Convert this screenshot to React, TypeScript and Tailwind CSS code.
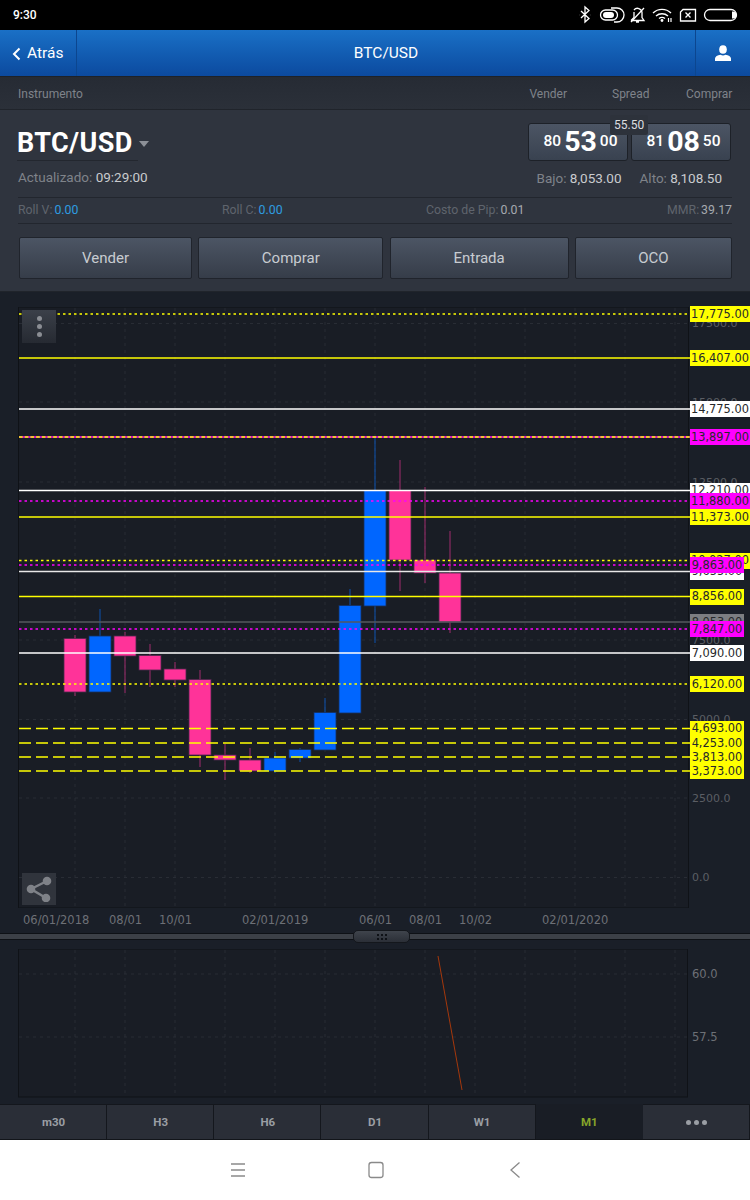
/** Trading screen — BTC/USD quote panel, monthly candle chart with levels, indicator pane. */
import { Fragment } from "react";

const ROBOTO = "font-['Roboto',sans-serif]";
const DEJAVU = "font-['DejaVu_Sans',sans-serif]";

type Candle = { x: number; top: number; bottom: number; high: number; low: number; up: boolean };

const CANDLES: Candle[] = [
  { x: 75, top: 638.5, bottom: 692, high: 635, low: 696, up: false },
  { x: 100, top: 636, bottom: 692, high: 609, low: 692, up: true },
  { x: 125, top: 636, bottom: 656, high: 632, low: 693, up: false },
  { x: 150, top: 655.5, bottom: 670, high: 644, low: 687, up: false },
  { x: 175, top: 669, bottom: 680, high: 662, low: 687, up: false },
  { x: 200, top: 679.5, bottom: 755, high: 670, low: 767, up: false },
  { x: 225, top: 755, bottom: 760, high: 744, low: 780, up: false },
  { x: 250, top: 760, bottom: 771, high: 748, low: 773, up: false },
  { x: 275, top: 758, bottom: 771, high: 752, low: 773, up: true },
  { x: 300, top: 749.5, bottom: 758, high: 748, low: 762, up: true },
  { x: 325, top: 712.5, bottom: 750, high: 698, low: 750, up: true },
  { x: 350, top: 605.5, bottom: 713, high: 589, low: 713, up: true },
  { x: 375, top: 490.5, bottom: 606, high: 437, low: 643, up: true },
  { x: 400, top: 490.5, bottom: 560, high: 460, low: 591, up: false },
  { x: 425, top: 560, bottom: 573, high: 487, low: 583, up: false },
  { x: 450, top: 573, bottom: 622, high: 531, low: 633, up: false },
];

type Level = { y: number; label: string; color: string; dash?: string; width: number; bg: string };

const YELLOW = "#ffff00";
const MAGENTA = "#ff00ff";

// order matters: later labels sit on top, same as the app
const LEVELS: Level[] = [
  { y: 314, label: "17,775.00", color: YELLOW, dash: "2.5 3", width: 60, bg: "bg-[#ffff00]" },
  { y: 358, label: "16,407.00", color: YELLOW, width: 60, bg: "bg-[#ffff00]" },
  { y: 409, label: "14,775.00", color: "#ffffff", width: 60, bg: "bg-white" },
  { y: 490.5, label: "12,210.00", color: "#ffffff", width: 60, bg: "bg-white" },
  { y: 517, label: "11,373.00", color: YELLOW, width: 60, bg: "bg-[#ffff00]" },
  { y: 560.5, label: "10,027.00", color: YELLOW, dash: "2.5 3", width: 60, bg: "bg-[#ffff00]" },
  { y: 571.5, label: "9,655.00", color: "#e8e8e8", width: 54, bg: "bg-white" },
  { y: 596.5, label: "8,856.00", color: YELLOW, width: 54, bg: "bg-[#ffff00]" },
  { y: 622, label: "8,053.00", color: "#55585e", width: 54, bg: "bg-[#7c7e82]" },
  { y: 653, label: "7,090.00", color: "#ffffff", width: 54, bg: "bg-white" },
  { y: 684, label: "6,120.00", color: YELLOW, dash: "2.5 3", width: 54, bg: "bg-[#ffff00]" },
  { y: 728.5, label: "4,693.00", color: YELLOW, dash: "12 5", width: 54, bg: "bg-[#ffff00]" },
  { y: 743, label: "4,253.00", color: YELLOW, dash: "12 5", width: 54, bg: "bg-[#ffff00]" },
  { y: 757, label: "3,813.00", color: YELLOW, dash: "12 5", width: 54, bg: "bg-[#ffff00]" },
  { y: 771, label: "3,373.00", color: YELLOW, dash: "12 5", width: 54, bg: "bg-[#ffff00]" },
  { y: 437, label: "13,897.00", color: YELLOW, dash: "3.7 2", width: 60, bg: "bg-[#ff00ff]" },
  { y: 501, label: "11,880.00", color: MAGENTA, dash: "2.5 3", width: 60, bg: "bg-[#ff00ff]" },
  { y: 565, label: "9,863.00", color: MAGENTA, dash: "2.5 3", width: 54, bg: "bg-[#ff00ff]" },
  { y: 629, label: "7,847.00", color: MAGENTA, dash: "2.5 3", width: 54, bg: "bg-[#ff00ff]" },
];

const AXIS = [
  { y: 323.5, label: "17500.0" },
  { y: 402, label: "15000.0" },
  { y: 482, label: "12500.0" },
  { y: 561, label: "10000.0" },
  { y: 640, label: "7500.0" },
  { y: 719.5, label: "5000.0" },
  { y: 798, label: "2500.0" },
  { y: 877.5, label: "0.0" },
];

const DATES = [
  { x: 23, label: "06/01/2018" },
  { x: 109, label: "08/01" },
  { x: 159, label: "10/01" },
  { x: 242, label: "02/01/2019" },
  { x: 359, label: "06/01" },
  { x: 409, label: "08/01" },
  { x: 459, label: "10/02" },
  { x: 542, label: "02/01/2020" },
];

const GRID_X = [75, 125, 175, 225, 275, 325, 375, 425, 475, 525, 575, 625, 675];

function StatusIcons() {
  return (
    <svg width="170" height="30" viewBox="575 0 170 30" fill="none" stroke="#fff" strokeWidth="1.3" aria-hidden="true">
      {/* bluetooth */}
      <path d="M581 11 l8 7.5 -4 3.5 v-15 l4 3.5 -8 7.5" />
      <path d="M579 15h.1M590.5 15h.1" strokeWidth="2" />
      {/* battery saver */}
      <rect x="600.5" y="10" width="17" height="10" rx="5" />
      <rect x="603" y="12" width="11" height="6" rx="3" fill="#fff" stroke="none" />
      <path d="M611 8 h6 a7 7 0 0 1 0 14 h-3" />
      {/* muted bell */}
      <path d="M631 20.5 h13 l-2 -3 v-5 a4.5 4.5 0 0 0 -8 -2.5 M634 12 v5.500 l-3 3 M636 22 h3" />
      <path d="M631 22 L644 8" />
      {/* wifi */}
      <path d="M653 13 a13 13 0 0 1 18 0 M656 16 a9 9 0 0 1 12 0 M659 18.500 a5 5 0 0 1 6 0" strokeWidth="1.4" />
      <circle cx="662" cy="20.500" r="1.400" fill="#fff" stroke="none" />
      <path d="M668.500 18 v4 M671 18 v4" strokeWidth="1.200" />
      {/* no sim */}
      <path d="M683 9.500 h12.500 v11.500 h-15 v-9 z" />
      <path d="M685.500 12.500 l5 5 M690.500 12.500 l-5 5" />
      {/* battery */}
      <rect x="704.500" y="9.500" width="32" height="11" rx="5.500" />
      <path d="M732 11.500 h1 a3.500 3.500 0 0 1 0 7 h-1 z" fill="#fff" stroke="none" />
    </svg>
  );
}

function StatusBar() {
  return (
    <div className={`flex h-[30px] items-center justify-between bg-black pl-[13px] pr-[5px] ${ROBOTO}`}>
      <span className="text-[12px] font-medium text-white">9:30</span>
      <StatusIcons />
    </div>
  );
}

function Header() {
  return (
    <div className={`flex h-[47px] border-b border-[#1d222a] bg-gradient-to-b from-[#1a70c6] to-[#0c4a9f] text-white ${ROBOTO}`}>
      <div className="flex w-[77px] items-center gap-[6px] border-r border-[#0c468f] pl-[12px] pt-[1px]">
        <svg width="9" height="14" viewBox="0 0 9 14" fill="none" stroke="#fff" strokeWidth="2" aria-hidden="true">
          <path d="M7.500 1.500 L2 7 l5.500 5.500" />
        </svg>
        <span className="text-[15.500px]">Atrás</span>
      </div>
      <div className="flex flex-1 items-center justify-center pt-[1px] text-[15.500px]">BTC/USD</div>
      <div className="flex w-[55px] items-center justify-center border-l border-[#0c468f]">
        <svg width="16" height="16" viewBox="0 0 16 16" fill="#fff" aria-hidden="true">
          <ellipse cx="8" cy="4.500" rx="3.800" ry="4.300" />
          <path d="M0 16 v-2.500 c0 -2 2.500 -3 5.500 -3.700 q2.500 1.200 5 0 c3 .7 5.500 1.700 5.500 3.700 V16 z" />
        </svg>
      </div>
    </div>
  );
}

function PriceButton({ a, b, c }: { a: string; b: string; c: string }) {
  return (
    <div className="flex h-[38px] items-center justify-center gap-[3px] rounded-[3px] border border-[#1d2128] bg-gradient-to-b from-[#4c5564] to-[#394250] pl-[5px] text-white">
      <span className="text-[15.500px] font-medium">{a}</span>
      <span className="text-[28.500px] font-bold leading-none">{b}</span>
      <span className="text-[15.500px] font-medium">{c}</span>
    </div>
  );
}

function ActionButton({ children }: { children: string }) {
  return (
    <div className="flex h-[42px] items-center justify-center rounded-[2px] border border-[#20242c] bg-gradient-to-b from-[#4c5564] to-[#363d49] text-[15px] text-[#c8ccd1]">
      {children}
    </div>
  );
}

function Stat({ label, value, blue, end }: { label: string; value: string; blue?: boolean; end?: boolean }) {
  return (
    <div className={end ? "text-right" : ""}>
      <span className="text-[#5f646d]">{label}</span>
      <span className={`ml-[2px] ${blue ? "text-[#2e9ce0]" : "text-[#a5a9af]"}`}>{value}</span>
    </div>
  );
}

function QuotePanel() {
  return (
    <div className={ROBOTO}>
      <div className="flex h-[33px] items-center justify-between border-b border-[#20242b] bg-gradient-to-b from-[#262b34] to-[#2b3039] px-[18px] pt-[1px] text-[12px] text-[#7f838a]">
        <span>Instrumento</span>
        <div className="flex">
          <span className="w-[38px] text-right">Vender</span>
          <span className="ml-[45px] w-[37px]">Spread</span>
          <span className="ml-[37px] w-[46px] text-right">Comprar</span>
        </div>
      </div>

      <div className="h-[182px] border-b border-[#20242b] bg-[#2f343e]">
        <div className="flex h-[87px] justify-between pl-[17px] pr-[19px]">
          <div className="w-[121px]">
            <div className="mt-[16px] flex h-[35px] items-center gap-[6px] whitespace-nowrap border-b border-[#23272f] text-[27px] font-bold leading-none tracking-[0.4px] text-white">
              BTC/USD
              <span className="mt-[1px] h-0 w-0 shrink-0 border-x-[5px] border-t-[6px] border-x-transparent border-t-[#8c9097]" />
            </div>
            <div className="ml-[1px] mt-[6px] whitespace-nowrap text-[13.500px]">
              <span className="text-[#7f838a]">Actualizado:</span> <span className="text-[#c9cbce]">09:29:00</span>
            </div>
          </div>

          <div className="relative w-[203px] pt-[13px]">
            <div className="grid grid-cols-2 gap-[3px]">
              <PriceButton a="80" b="53" c="00" />
              <PriceButton a="81" b="08" c="50" />
            </div>
            <div className="absolute left-[82px] top-[5px] rounded-[2px] bg-[#2d323b] px-[4px] py-[2px] text-[12px] leading-[16px] text-[#dcdee0]">55.50</div>
            <div className="mt-[7px] flex justify-end gap-[18px] pr-[9px] text-[13.500px]">
              <span className="text-[#7f838a]">
                Bajo: <span className="text-[#c9cbce]">8,053.00</span>
              </span>
              <span className="text-[#7f838a]">
                Alto: <span className="text-[#c9cbce]">8,108.50</span>
              </span>
            </div>
          </div>
        </div>

        <div className="mx-[18px] grid h-[27px] grid-cols-[204px_204px_204px_1fr] items-center border-y border-[#22262e] text-[12.300px]">
          <Stat label="Roll V:" value="0.00" blue />
          <Stat label="Roll C:" value="0.00" blue />
          <Stat label="Costo de Pip:" value="0.01" />
          <Stat label="MMR:" value="39.17" end />
        </div>

        <div className="ml-[19px] mt-[13px] grid w-[713px] grid-cols-[173px_185px_179px_157px] gap-x-[6.300px]">
          <ActionButton>Vender</ActionButton>
          <ActionButton>Comprar</ActionButton>
          <ActionButton>Entrada</ActionButton>
          <ActionButton>OCO</ActionButton>
        </div>
      </div>
    </div>
  );
}

function ChartGrid({ top, bottom, rows }: { top: number; bottom: number; rows: number[] }) {
  return (
    <g stroke="#292d35" strokeWidth="1" strokeDasharray="3 4">
      {GRID_X.map((x) => (
        <line key={x} x1={x} x2={x} y1={top} y2={bottom} />
      ))}
      {rows.map((y) => (
        <line key={y} x1={19} x2={688} y1={y} y2={y} />
      ))}
    </g>
  );
}

function MainChart() {
  return (
    <div className={`relative h-[601px] ${DEJAVU}`}>
      <svg className="absolute inset-0" width="750" height="601" viewBox="0 307 750 601" aria-hidden="true">
        <rect x="18.500" y="307" width="670" height="601" fill="#191d25" stroke="#0f1217" />
        <ChartGrid top={308} bottom={907} rows={AXIS.map((a) => a.y)} />

        {CANDLES.map((c) => (
          <Fragment key={c.x}>
            <line x1={c.x} x2={c.x} y1={c.high} y2={c.low} stroke={c.up ? "#0c52b0" : "#a12d6e"} strokeWidth="1" />
            <rect
              x={c.x - 11}
              y={c.top}
              width={22}
              height={c.bottom - c.top}
              fill={c.up ? "#0066ff" : "#ff3399"}
              stroke={c.up ? "#17305c" : "#4c2a4b"}
              strokeWidth="0.800"
            />
          </Fragment>
        ))}

        {LEVELS.map((l) => (
          <Fragment key={l.label}>
            {l.label === "13,897.00" && <line x1={19} x2={690} y1={l.y} y2={l.y} stroke={MAGENTA} strokeWidth="1.500" />}
            <line x1={19} x2={690} y1={l.y} y2={l.y} stroke={l.color} strokeWidth={l.dash ? 1.600 : 1.500} strokeDasharray={l.dash} />
          </Fragment>
        ))}
      </svg>

      {AXIS.map((a) => (
        <span key={a.label} className="absolute left-[692px] -translate-y-1/2 text-[11px] text-[#5b5e64]" style={{ top: a.y - 306.5 }}>
          {a.label}
        </span>
      ))}

      {LEVELS.map((l) => (
        <span
          key={l.label}
          className={`absolute left-[690px] flex h-[16px] items-center justify-center pt-[1px] text-[11.400px] leading-none text-[#26282a] ${l.bg}`}
          style={{ top: l.y - 307 - 8, width: l.width }}
        >
          {l.label}
        </span>
      ))}

      <div className="absolute left-[22px] top-[3px] flex h-[33px] w-[34px] flex-col items-center justify-center gap-[3px] bg-gradient-to-b from-[#3b4049] to-[#262a32]">
        <span className="h-[5px] w-[5px] rounded-full bg-[#8b8e94]" />
        <span className="h-[5px] w-[5px] rounded-full bg-[#8b8e94]" />
        <span className="h-[5px] w-[5px] rounded-full bg-[#8b8e94]" />
      </div>

      <div className="absolute bottom-[3px] left-[22px] flex h-[32px] w-[34px] items-center justify-center bg-[#30343c]">
        <svg width="26" height="26" viewBox="0 0 26 26" fill="#7f8288" stroke="#7f8288" aria-hidden="true">
          <circle cx="21" cy="5" r="4.300" stroke="none" />
          <circle cx="5" cy="13" r="4.300" stroke="none" />
          <circle cx="20" cy="22" r="4.300" stroke="none" />
          <path d="M21 5 L5 13 L20 22" fill="none" strokeWidth="2.500" />
        </svg>
      </div>
    </div>
  );
}

function DateAxis() {
  return (
    <div className={`relative h-[25px] text-[11.500px] text-[#6d7076] ${DEJAVU}`}>
      {DATES.map((d) => (
        <span key={d.x + d.label} className="absolute top-[4px]" style={{ left: d.x }}>
          {d.label}
        </span>
      ))}
    </div>
  );
}

function PaneDivider() {
  return (
    <div className="relative h-[7px] border-y border-[#0e1116] bg-[#3c4047]">
      <div className="absolute left-[353px] top-[-4px] flex h-[13px] w-[57px] items-center justify-center rounded-[5px] border border-[#14171c] bg-gradient-to-b from-[#3f444c] to-[#2b2f37]">
        <div className="grid grid-cols-3 gap-x-[2px] gap-y-[2px]">
          {[0, 1, 2, 3, 4, 5].map((i) => (
            <span key={i} className="h-[2px] w-[2px] bg-[#0e1116]" />
          ))}
        </div>
      </div>
    </div>
  );
}

function IndicatorPane() {
  return (
    <div className={`relative h-[149px] ${DEJAVU}`}>
      <svg className="absolute inset-0" width="750" height="149" viewBox="0 949 750 149" aria-hidden="true">
        <rect x="18.500" y="949" width="669" height="148" fill="#191d25" stroke="#0f1217" />
        <ChartGrid top={950} bottom={1096} rows={[974, 1037]} />
        <line x1="438" y1="956" x2="462" y2="1090" stroke="#a5380c" strokeWidth="1" />
      </svg>
      <span className="absolute left-[692px] top-[26px] -translate-y-1/2 text-[11.500px] text-[#6d7076]">60.0</span>
      <span className="absolute left-[692px] top-[89px] -translate-y-1/2 text-[11.500px] text-[#6d7076]">57.5</span>
    </div>
  );
}

function PeriodTabs() {
  const tabs = ["m30", "H3", "H6", "D1", "W1", "M1"];
  const idle = "flex items-center justify-center border-r border-t border-[#14171d] bg-[#2a2e37] pl-[1px] pt-[1px] text-[11.500px] font-bold text-[#9a9ea4]";
  return (
    <div className={`grid h-[36px] grid-cols-7 border-b border-[#12151a] ${ROBOTO}`}>
      {tabs.map((t) =>
        t === "M1" ? (
          <div key={t} className="flex items-center justify-center bg-[#191d25] pt-[2px] text-[11.500px] font-bold text-[#86a52a]">
            {t}
          </div>
        ) : (
          <div key={t} className={idle}>
            {t}
          </div>
        ),
      )}
      <div className="flex items-center justify-center gap-[3px] border-r border-t border-[#14171d] bg-[#2a2e37] pl-[1px] pt-[1px]">
        <span className="h-[5px] w-[5px] rounded-full bg-[#9a9ea4]" />
        <span className="h-[5px] w-[5px] rounded-full bg-[#9a9ea4]" />
        <span className="h-[5px] w-[5px] rounded-full bg-[#9a9ea4]" />
      </div>
    </div>
  );
}

function NavBar() {
  return (
    <div className="relative h-[60px] bg-white">
      <svg className="absolute inset-0" width="750" height="60" viewBox="0 1140 750 60" fill="none" stroke="#8a8a8a" strokeWidth="1.300" aria-hidden="true">
        <path d="M231 1164 h14 M231 1170 h14 M231 1176 h14" />
        <rect x="369" y="1162.500" width="14" height="15" rx="2.500" />
        <path d="M519.500 1162.500 L511 1170 l8.500 7.500" />
      </svg>
    </div>
  );
}

export default function App() {
  return (
    <div className="h-[1200px] w-[750px] overflow-hidden bg-[#1a1f28]">
      <StatusBar />
      <Header />
      <QuotePanel />
      <div className="h-[848px] pt-[15px]">
        <MainChart />
        <DateAxis />
        <PaneDivider />
        <div className="h-[9px]" />
        <IndicatorPane />
        <div className="h-[6px]" />
        <PeriodTabs />
      </div>
      <NavBar />
    </div>
  );
}
